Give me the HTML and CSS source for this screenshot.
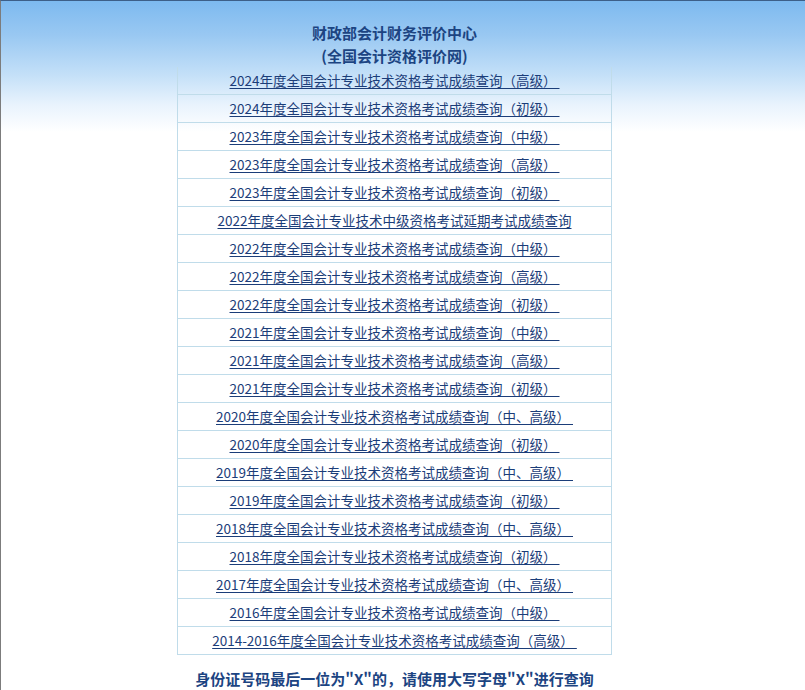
FILE: index.html
```html
<!DOCTYPE html>
<html lang="zh-CN">
<head>
<meta charset="utf-8">
<title>财政部会计财务评价中心</title>
<link rel="stylesheet" href="styles.css">
</head>
<body>
<div class="page">
  <div class="header">
    <div class="title">财政部会计财务评价中心</div>
    <div class="title">(全国会计资格评价网)</div>
  </div>
  <ul class="list">
    <li><a href="#">2024年度全国会计专业技术资格考试成绩查询（高级）&nbsp;</a></li>
    <li><a href="#">2024年度全国会计专业技术资格考试成绩查询（初级）&nbsp;</a></li>
    <li><a href="#">2023年度全国会计专业技术资格考试成绩查询（中级）&nbsp;</a></li>
    <li><a href="#">2023年度全国会计专业技术资格考试成绩查询（高级）&nbsp;</a></li>
    <li><a href="#">2023年度全国会计专业技术资格考试成绩查询（初级）&nbsp;</a></li>
    <li><a href="#">2022年度全国会计专业技术中级资格考试延期考试成绩查询</a></li>
    <li><a href="#">2022年度全国会计专业技术资格考试成绩查询（中级）&nbsp;</a></li>
    <li><a href="#">2022年度全国会计专业技术资格考试成绩查询（高级）&nbsp;</a></li>
    <li><a href="#">2022年度全国会计专业技术资格考试成绩查询（初级）&nbsp;</a></li>
    <li><a href="#">2021年度全国会计专业技术资格考试成绩查询（中级）&nbsp;</a></li>
    <li><a href="#">2021年度全国会计专业技术资格考试成绩查询（高级）&nbsp;</a></li>
    <li><a href="#">2021年度全国会计专业技术资格考试成绩查询（初级）&nbsp;</a></li>
    <li><a href="#">2020年度全国会计专业技术资格考试成绩查询（中、高级）&nbsp;</a></li>
    <li><a href="#">2020年度全国会计专业技术资格考试成绩查询（初级）&nbsp;</a></li>
    <li><a href="#">2019年度全国会计专业技术资格考试成绩查询（中、高级）&nbsp;</a></li>
    <li><a href="#">2019年度全国会计专业技术资格考试成绩查询（初级）&nbsp;</a></li>
    <li><a href="#">2018年度全国会计专业技术资格考试成绩查询（中、高级）&nbsp;</a></li>
    <li><a href="#">2018年度全国会计专业技术资格考试成绩查询（初级）&nbsp;</a></li>
    <li><a href="#">2017年度全国会计专业技术资格考试成绩查询（中、高级）&nbsp;</a></li>
    <li><a href="#">2016年度全国会计专业技术资格考试成绩查询（中级）&nbsp;</a></li>
    <li><a href="#">2014-2016年度全国会计专业技术资格考试成绩查询（高级）&nbsp;</a></li>
  </ul>
  <div class="notice">身份证号码最后一位为"X"的，请使用大写字母"X"进行查询</div>
</div>
</body>
</html>
```

FILE: styles.css
```css
html {
  overflow: hidden;
  height: 100%;
}
body {
  margin: 0;
  min-height: 100%;
  box-sizing: border-box;
  border-top: 1px solid #3d5f88;
  border-left: 1px solid #7c7c7c;
  background: #fff linear-gradient(#7cb9ef 0px, #99c8f2 35px, #c4e0f8 75px, #e9f3fd 105px, #ffffff 132px) no-repeat;
  background-size: 100% 132px;
  font-family: "Noto Sans CJK SC", "Microsoft YaHei", sans-serif;
}
.page {
  width: 787px;
}
.header {
  padding-top: 20px;
  text-align: center;
}
.title {
  font-size: 15px;
  font-weight: bold;
  line-height: 23px;
  color: #1c4482;
}
.list {
  list-style: none;
  margin: 0 auto;
  padding: 0;
  width: 433px;
  border-left: 1px solid #c0dcea;
  border-right: 1px solid #c0dcea;
}
.list li {
  height: 27px;
  border-bottom: 1px solid #c0dcea;
  text-align: center;
  font-size: 13.5px;
  line-height: 27px;
}
.list a {
  color: #1b3d79;
  text-decoration: underline;
  text-underline-offset: 2px;
}
.notice {
  margin-top: 12px;
  text-align: center;
  font-size: 15px;
  font-weight: bold;
  line-height: 24px;
  color: #1c4482;
}
```
